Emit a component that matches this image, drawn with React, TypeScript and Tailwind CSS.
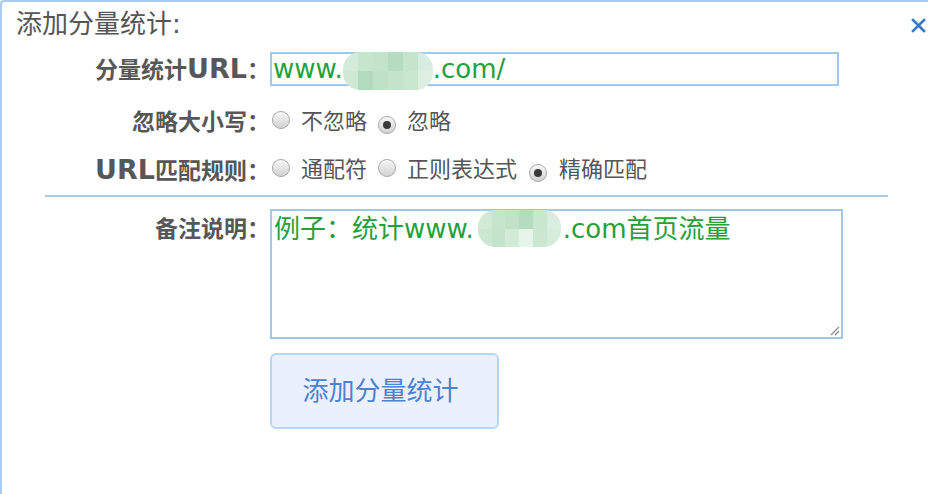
import React from "react";

const FONT = { fontFamily: '"DejaVu Sans", "Noto Sans CJK SC", sans-serif' };

function Radio({ checked }: { checked?: boolean }) {
  return (
    <span className="inline-flex h-[18px] w-[18px] shrink-0 items-center justify-center rounded-full border border-[#a5a5a5] bg-gradient-to-b from-[#f6f6f6] to-[#d2d2d2] shadow-[inset_0_1px_1px_rgba(255,255,255,0.9)]">
      {checked && <span className="h-[8px] w-[8px] rounded-full bg-[#3a3a3a]" />}
    </span>
  );
}

function Blob({ w, h, cells }: { w: number; h: number; cells: string[] }) {
  return (
    <span
      className="inline-grid grid-cols-6 grid-rows-2 overflow-hidden rounded-[17px] align-middle"
      style={{ width: w, height: h }}
    >
      {cells.map((c, i) => (
        <span key={i} style={{ background: c }} />
      ))}
    </span>
  );
}

const cellsA = [
  "#d3ebd8", "#c6e5cd", "#c3e3ca", "#b5dcbf", "#c5e4cc", "#d8ede0",
  "#cfe9d4", "#b3dbbd", "#bfe1c6", "#c3e3ca", "#c9e6cf", "#dcefe1",
];
const cellsB = [
  "#d0ead6", "#c6e5cd", "#c2e2c8", "#b6dcbf", "#c9e6cf", "#d9eee0",
  "#cbe7d1", "#c4e3cb", "#d2ebd7", "#e6f4e9", "#cbe7d1", "#d6ecdb",
];

function Label({ children }: { children: React.ReactNode }) {
  return (
    <div className="w-[270px] shrink-0 whitespace-nowrap text-right text-[23px] font-bold leading-[30px] text-[#575757]">
      {children}
    </div>
  );
}

function Url() {
  return <span className="text-[27px]">URL</span>;
}

export default function App() {
  return (
    <div style={FONT} className="h-[494px] w-[928px] overflow-hidden bg-white">
      <div className="h-[520px] w-[960px] rounded-tl-[4px] border-l-2 border-t-2 border-[#a9cbee] bg-white">
        <div className="flex items-start justify-between pl-[14px] pt-[6px] pr-[34px]">
          <div className="text-[26px] leading-[32px] text-[#555]">添加分量统计:</div>
          <div className="mt-[10px]">
            <svg width="15" height="15" viewBox="0 0 15 15">
              <path d="M2 2 L13 13 M13 2 L2 13" stroke="#3577c8" strokeWidth="2.6" strokeLinecap="square" />
            </svg>
          </div>
        </div>

        <div className="ml-[-2px] mt-[12px] flex h-[34px] items-center">
          <Label>
            分量统计<Url />：
          </Label>
          <div className="flex h-[34px] w-[569px] items-center whitespace-nowrap border-2 border-[#9dc9ea] pl-[1px] text-[26px] leading-[30px] text-[#25a03a]">
            www.
            <span className="mt-[4px] inline-flex">
              <Blob w={90} h={38} cells={cellsA} />
            </span>
            .com/
          </div>
        </div>

        <div className="ml-[-2px] mt-[19px] flex h-[34px] items-center">
          <Label>忽略大小写：</Label>
          <div className="flex items-center text-[22px] leading-[30px] text-[#555]">
            <span className="ml-[2px]"><Radio /></span>
            <span className="ml-[11px]">不忽略</span>
            <span className="ml-[11px]"><Radio checked /></span>
            <span className="ml-[11px]">忽略</span>
          </div>
        </div>

        <div className="ml-[-2px] mt-[14px] flex h-[34px] items-center">
          <Label>
            <Url />匹配规则：
          </Label>
          <div className="flex items-center text-[22px] leading-[30px] text-[#555]">
            <span className="ml-[2px]"><Radio /></span>
            <span className="ml-[11px]">通配符</span>
            <span className="ml-[11px]"><Radio /></span>
            <span className="ml-[11px]">正则表达式</span>
            <span className="ml-[12px]"><Radio checked /></span>
            <span className="ml-[12px]">精确匹配</span>
          </div>
        </div>

        <div className="ml-[43px] mt-[8px] h-[2px] w-[843px] bg-[#a9c9ea]" />

        <div className="ml-[-2px] mt-[12px] flex items-start">
          <div className="pt-[5px]">
            <Label>备注说明：</Label>
          </div>
          <div className="relative h-[130px] w-[573px] border-2 border-[#9dc9ea] pl-[2px] pt-[2px]">
            <div className="flex items-start whitespace-nowrap text-[26px] leading-[32px] text-[#25a03a]">
              例子：统计www.
              <span className="mt-[-3px] ml-[4px] mr-[2px] inline-flex">
                <Blob w={83} h={37} cells={cellsB} />
              </span>
              .com首页流量
            </div>
            <svg className="absolute bottom-[1px] right-[1px]" width="11" height="11" viewBox="0 0 11 11">
              <path d="M10 2 L2 10 M10 6 L6 10" stroke="#888" strokeWidth="1.2" />
            </svg>
          </div>
        </div>

        <div className="ml-[268px] mt-[14px]">
          <button className="flex h-[76px] w-[229px] items-center justify-center rounded-[6px] border-2 border-[#b6d6f8] bg-[#ebf0fd] pr-[8px] text-[26px] text-[#4c82d2]">
            添加分量统计
          </button>
        </div>
      </div>
    </div>
  );
}
